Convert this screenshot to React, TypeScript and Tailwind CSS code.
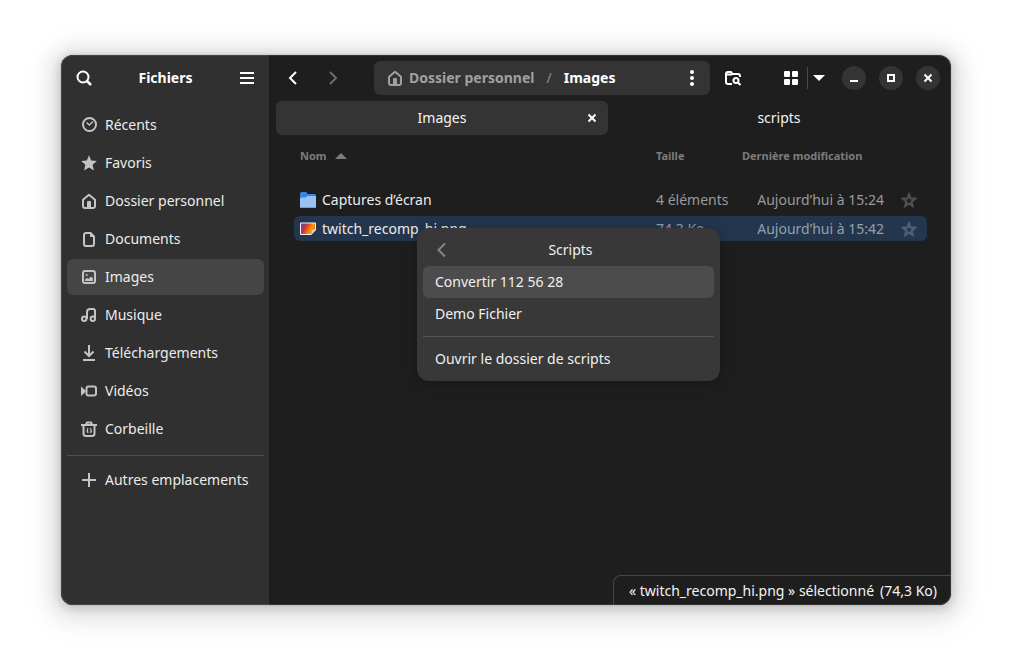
import { useState } from 'react'
import type { ReactNode } from 'react'

interface Place {
  id: string
  label: string
  icon: ReactNode
}

interface FileEntry {
  id: string
  name: string
  size: string
  modified: string
  icon: ReactNode
}

function Icon({ children }: { children: ReactNode }) {
  return (
    <svg viewBox="0 0 16 16" className="size-4 shrink-0" fill="none" stroke="currentColor" strokeWidth="2" aria-hidden="true">
      {children}
    </svg>
  )
}

const HomeIcon = () => (
  <Icon>
    <path d="M2 6.800V13a2 2 0 0 0 2 2h8a2 2 0 0 0 2-2V6.800L8 1.800z" strokeLinejoin="round" />
    <path d="M6 15V9a1 1 0 0 1 1-1h2a1 1 0 0 1 1 1v6z" fill="currentColor" stroke="none" />
  </Icon>
)

const StarOutline = () => (
  <Icon>
    <path d="M8 2.500l1.500 3.900 4.500.4-3.400 2.800 1 4.200L8 11.500l-3.600 2.300 1-4.200L2 6.800l4.500-.4z" strokeWidth="2.200" />
  </Icon>
)

const places: Place[] = [
  {
    id: 'recent',
    label: 'Récents',
    icon: (
      <Icon>
        <circle cx="8.500" cy="7.500" r="6.500" />
        <path d="M5.500 5.500l2.800 2.500L12 4.500" strokeWidth="1.400" />
      </Icon>
    ),
  },
  {
    id: 'starred',
    label: 'Favoris',
    icon: (
      <Icon>
        <path d="M8 .3l2.200 5.200 5.700.5-4.300 3.700 1.300 5.900L8 12.500l-4.900 3.100 1.300-5.900L.1 6l5.700-.5z" fill="currentColor" stroke="none" />
      </Icon>
    ),
  },
  { id: 'home', label: 'Dossier personnel', icon: <HomeIcon /> },
  {
    id: 'documents',
    label: 'Documents',
    icon: (
      <Icon>
        <path d="M5 2h4.500L13 5.500V13a2 2 0 0 1-2 2H5a2 2 0 0 1-2-2V4a2 2 0 0 1 2-2z" />
        <path d="M9 1.500V6h4.500z" fill="currentColor" stroke="none" />
      </Icon>
    ),
  },
  {
    id: 'pictures',
    label: 'Images',
    icon: (
      <Icon>
        <rect x="2" y="2" width="12" height="12" rx="2" />
        <circle cx="5.700" cy="6" r="1" fill="currentColor" stroke="none" />
        <path d="M4 12V10.500l2-1.500 1.500 1L10 7.500l2 2V12z" fill="currentColor" stroke="none" />
      </Icon>
    ),
  },
  {
    id: 'music',
    label: 'Musique',
    icon: (
      <Icon>
        <circle cx="3.200" cy="11.800" r="2.200" />
        <circle cx="11.800" cy="11.800" r="2.200" />
        <path d="M6 12V5a3 3 0 0 1 3-3h3a2 2 0 0 1 2 2v8" />
      </Icon>
    ),
  },
  {
    id: 'downloads',
    label: 'Téléchargements',
    icon: (
      <Icon>
        <path d="M8 0v11M3.500 6.500L8 11l4.500-4.500M2 15h12" />
      </Icon>
    ),
  },
  {
    id: 'videos',
    label: 'Vidéos',
    icon: (
      <Icon>
        <rect x="5.500" y="3.500" width="9.500" height="9" rx="2" />
        <path d="M0 3.500l4.500 4v1.500L0 13z" fill="currentColor" stroke="none" />
      </Icon>
    ),
  },
  {
    id: 'trash',
    label: 'Corbeille',
    icon: (
      <Icon>
        <path d="M0 4h16M5 3.500L6 1.500h4l1 2M2.500 4v8.500A2.500 2.500 0 0 0 5 15h6a2.500 2.500 0 0 0 2.500-2.500V4" />
        <path d="M7 7a3 4 0 0 0 0 5M9.500 7a3 4 0 0 1 0 5" strokeWidth="1.200" />
      </Icon>
    ),
  },
]

const files: FileEntry[] = [
  {
    id: 'captures',
    name: 'Captures d’écran',
    size: '4 éléments',
    modified: 'Aujourd’hui à 15:24',
    icon: (
      <svg viewBox="0 0 16 16" className="size-4 shrink-0" aria-hidden="true">
        <path d="M0 1.500A1.500 1.500 0 0 1 1.500 0h4.200a1.500 1.500 0 0 1 1.300.8l.5 1.200h7A1.500 1.500 0 0 1 16 3.500V15H0z" fill="#3584e4" />
        <path d="M0 7a1.500 1.500 0 0 1 1.500-1.500h4L7.500 4H16v11.500H0z" fill="#99c1f1" />
        <path d="M0 15h16v1H0z" fill="#62a0ea" />
      </svg>
    ),
  },
  {
    id: 'twitch',
    name: 'twitch_recomp_hi.png',
    size: '74,3 Ko',
    modified: 'Aujourd’hui à 15:42',
    icon: (
      <svg viewBox="0 0 16 16" className="size-4 shrink-0" aria-hidden="true">
        <defs>
          <linearGradient id="thumb" x1="0" y1="0.2" x2="1" y2="0.6">
            <stop offset="0" stopColor="#7a3db0" />
            <stop offset="0.25" stopColor="#a8365a" />
            <stop offset="0.5" stopColor="#ee5a10" />
            <stop offset="0.75" stopColor="#ff9a10" />
            <stop offset="1" stopColor="#f06000" />
          </linearGradient>
        </defs>
        <path d="M1 1.500h14a1 1 0 0 1 1 1V9l-5 5H1a1 1 0 0 1-1-1V2.500a1 1 0 0 1 1-1z" fill="#f6f5f4" />
        <path d="M1 2.500h14V9l-4 4H1z" fill="url(#thumb)" />
        <path d="M16 8.500c-2.500-.5-4.500.5-4.500 2.500 0 1.500-.5 2.500-1.500 3h1z" fill="#d5d3cf" />
      </svg>
    ),
  },
]

const scripts = ['Convertir 112 56 28', 'Demo Fichier']
const tabs = ['Images', 'scripts']

export default function App() {
  const [place, setPlace] = useState('pictures')
  const [activeTab, setActiveTab] = useState('Images')
  const [selected, setSelected] = useState('twitch')

  return (
    <div className="flex min-h-screen bg-white px-[61px] pt-[55px] pb-[67px] font-['Noto_Sans',sans-serif] text-sm text-white">
      <div className="relative flex flex-1 overflow-hidden rounded-xl bg-[#1e1e1e] shadow-[0_0_0_1px_rgba(0,0,6,0.05),0_2px_8px_2px_rgba(0,0,6,0.13),0_3px_20px_10px_rgba(0,0,6,0.09),0_6px_32px_16px_rgba(0,0,6,0.04)]">
        {/* Sidebar */}
        <aside className="flex w-52 shrink-0 flex-col bg-[#303030]">
          <header className="flex h-[46px] items-center justify-between pr-3.5 pl-[15px]">
            <button aria-label="Rechercher">
              <Icon>
                <circle cx="7" cy="7" r="5.500" />
                <path d="M11 11l4 4" strokeWidth="2.500" />
              </Icon>
            </button>
            <h1 className="font-bold">Fichiers</h1>
            <button aria-label="Menu principal">
              <Icon>
                <path d="M1 3h14M1 8h14M1 13h14" />
              </Icon>
            </button>
          </header>
          <nav className="flex flex-col gap-0.5 py-1.5 pr-[5px] pl-1.5">
            {places.map((item) => (
              <button
                key={item.id}
                onClick={() => setPlace(item.id)}
                className={`flex h-9 items-center gap-2 rounded-md px-3.5 text-left text-[#ececec] ${place === item.id ? 'bg-[#454545]' : ''}`}
              >
                <span className="text-[#c4c4c4]">{item.icon}</span>
                {item.label}
              </button>
            ))}
            <hr className="mt-1.5 mb-1 border-[#505050]" />
            <button className="flex h-9 items-center gap-2 rounded-md px-3.5 text-left text-[#ececec]">
              <span className="text-[#c4c4c4]">
                <Icon>
                  <path d="M8 1v14M1 8h14" />
                </Icon>
              </span>
              Autres emplacements
            </button>
          </nav>
        </aside>

        <main className="flex min-w-0 flex-1 flex-col">
          {/* Toolbar */}
          <header className="flex h-[46px] shrink-0 items-center pr-[11px] pl-4">
            <button aria-label="Précédent">
              <Icon>
                <path d="M11 2L5 8l6 6" />
              </Icon>
            </button>
            <button aria-label="Suivant" className="ml-6 text-[#6c6c6c]">
              <Icon>
                <path d="M5 2l6 6-6 6" />
              </Icon>
            </button>
            <div className="ml-[33px] flex h-[34px] flex-1 items-center rounded-md bg-[#343434] pr-2.5 pl-[13px] font-bold">
              <button className="flex items-center gap-1.5 text-[#a0a0a0]">
                <HomeIcon />
                Dossier personnel
              </button>
              <span className="mx-3 font-normal text-[#8c8c8c]">/</span>
              <button>Images</button>
              <button aria-label="Menu du dossier" className="ml-auto">
                <svg viewBox="0 0 16 16" className="size-4" fill="currentColor" aria-hidden="true">
                  <circle cx="8" cy="2" r="2" />
                  <circle cx="8" cy="8" r="2" />
                  <circle cx="8" cy="14" r="2" />
                </svg>
              </button>
            </div>
            <button aria-label="Rechercher dans le dossier" className="ml-[15px]">
              <Icon>
                <path d="M7 14H3a2 2 0 0 1-2-2V4a2 2 0 0 1 2-2h3l1.500 2H13a2 2 0 0 1 2 2v1M1 4.500h6" />
                <circle cx="11" cy="10.500" r="2.500" />
                <path d="M12.800 12.500L15.500 15" />
              </Icon>
            </button>
            <button aria-label="Vue en grille" className="ml-[42px]">
              <svg viewBox="0 0 16 16" className="size-4" fill="currentColor" aria-hidden="true">
                <rect x="1" y="1" width="6" height="6" rx="1" />
                <rect x="9" y="1" width="6" height="6" rx="1" />
                <rect x="1" y="9" width="6" height="6" rx="1" />
                <rect x="9" y="9" width="6" height="6" rx="1" />
              </svg>
            </button>
            <span className="ml-2 h-[22px] w-px bg-[#4a4a4a]" />
            <button aria-label="Options d’affichage" className="ml-[3px]">
              <svg viewBox="0 0 16 16" className="size-4" fill="currentColor" aria-hidden="true">
                <path d="M2 5h12l-6 6z" />
              </svg>
            </button>
            <div className="ml-[15px] flex gap-[13px]">
              <button aria-label="Réduire" className="flex size-6 items-center justify-center rounded-full bg-[#343434]">
                <Icon>
                  <path d="M4 11h8" />
                </Icon>
              </button>
              <button aria-label="Agrandir" className="flex size-6 items-center justify-center rounded-full bg-[#343434]">
                <Icon>
                  <rect x="5" y="5" width="6" height="6" />
                </Icon>
              </button>
              <button aria-label="Fermer" className="flex size-6 items-center justify-center rounded-full bg-[#343434]">
                <Icon>
                  <path d="M4.500 4.500l7 7M11.500 4.500l-7 7" />
                </Icon>
              </button>
            </div>
          </header>

          {/* Tabs */}
          <div className="flex h-[34px] shrink-0 gap-[5px] pr-1.5 pl-[7px]">
            {tabs.map((tab) => (
              <div key={tab} className={`relative flex flex-1 rounded-md ${activeTab === tab ? 'bg-[#343434]' : ''}`}>
                <button onClick={() => setActiveTab(tab)} className="flex-1 text-[#f4f4f4]">
                  {tab}
                </button>
                {activeTab === tab && (
                  <button aria-label="Fermer l’onglet" className="absolute inset-y-0 right-2">
                    <Icon>
                      <path d="M4.500 4.500l7 7M11.500 4.500l-7 7" />
                    </Icon>
                  </button>
                )}
              </div>
            ))}
          </div>

          {/* File list */}
          <div className="pr-6 pl-[25px]">
            <table className="w-full table-fixed border-separate border-spacing-x-0 border-spacing-y-1">
              <colgroup>
                <col />
                <col className="w-[86px]" />
                <col className="w-[154px]" />
                <col className="w-[37px]" />
              </colgroup>
              <thead className="text-left text-[11px] text-[#7c7c7c]">
                <tr className="h-11 align-top leading-[34px]">
                  <th className="pl-1.5">
                    <span className="flex items-center gap-1.5">
                      Nom
                      <svg viewBox="0 0 16 16" className="size-4" fill="currentColor" aria-hidden="true">
                        <path d="M2 11h12L8 5z" />
                      </svg>
                    </span>
                  </th>
                  <th className="pl-1.5">Taille</th>
                  <th className="pl-1.5" colSpan={2}>Dernière modification</th>
                </tr>
              </thead>
              <tbody>
                {files.map((file) => (
                  <tr
                    key={file.id}
                    onClick={() => setSelected(file.id)}
                    className={`h-[25px] leading-[25px] ${selected === file.id ? 'bg-[#23364d] text-[#94a0ae]' : 'text-[#9a9a9a]'}`}
                  >
                    <td className="rounded-l-md p-0 pl-1.5">
                      <span className="flex items-center gap-1.5 text-[#ececec]">
                        {file.icon}
                        {file.name}
                      </span>
                    </td>
                    <td className="p-0 pl-1.5 whitespace-nowrap">{file.size}</td>
                    <td className="p-0 pr-1.5 text-right whitespace-nowrap">{file.modified}</td>
                    <td className="rounded-r-md p-0">
                      <button aria-label="Ajouter aux favoris" className="mx-auto flex opacity-40">
                        <StarOutline />
                      </button>
                    </td>
                  </tr>
                ))}
              </tbody>
            </table>
          </div>
        </main>

        {/* Context menu */}
        <div role="menu" className="absolute top-[173px] left-[356px] w-[303px] rounded-xl bg-[#383838] p-1.5 text-[#f0f0f0] shadow-[0_1px_5px_1px_rgba(0,0,0,0.1),0_2px_14px_3px_rgba(0,0,0,0.1)]">
          <button className="relative flex h-8 w-full items-center justify-center pl-1">
            <span className="absolute left-2.5 text-[#858585]">
              <Icon>
                <path d="M12 1.500L5.500 8l6.500 6.500" />
              </Icon>
            </span>
            Scripts
          </button>
          {scripts.map((script, i) => (
            <button
              key={script}
              role="menuitem"
              className={`flex h-8 w-full items-center rounded-md px-3 ${i === 0 ? 'bg-[#4c4c4c]' : ''}`}
            >
              {script}
            </button>
          ))}
          <hr className="my-1.5 border-[#555555]" />
          <button role="menuitem" className="flex h-8 w-full items-center rounded-md px-3">
            Ouvrir le dossier de scripts
          </button>
        </div>

        {/* Floating status bar */}
        <div className="absolute right-0 bottom-0 flex h-[30px] items-center gap-1.5 rounded-tl-lg border-t border-l border-[#444444] bg-[#1e1e1e] pr-3.5 pl-[15px] text-[#f4f4f4]">
          <span>« twitch_recomp_hi.png » sélectionné</span>
          <span>(74,3 Ko)</span>
        </div>
        <div className="pointer-events-none absolute inset-0 rounded-xl border border-white/10" />
      </div>
    </div>
  )
}
